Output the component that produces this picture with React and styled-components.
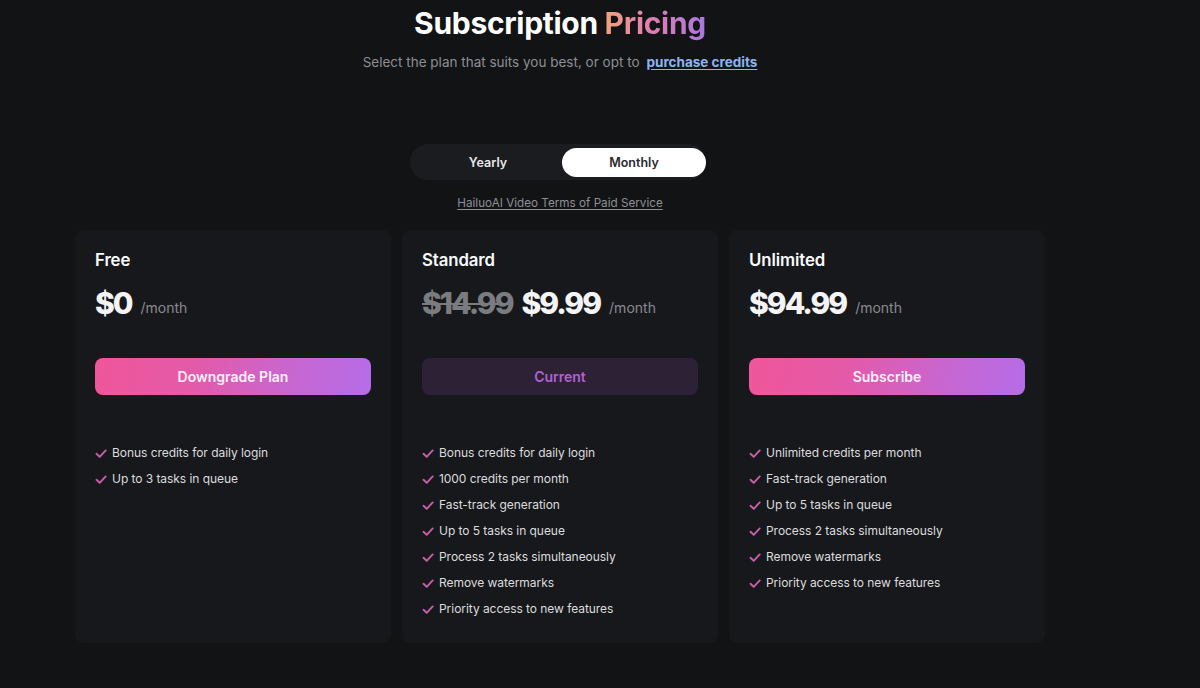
import React from "react";
import styled, { createGlobalStyle } from "styled-components";

const Global = createGlobalStyle`
  html, body { margin: 0; padding: 0; background: #121315; }
  body { font-family: Inter, "Noto Sans", sans-serif; color: #fff; }
  * { box-sizing: border-box; }
`;

const Page = styled.div`
  width: 1200px;
  height: 688px;
  overflow: hidden;
  background: #121315;
  padding-left: 75px;
`;

const Column = styled.div`
  width: 970px;
  display: flex;
  flex-direction: column;
  align-items: center;
`;

const Title = styled.h1`
  margin: 4px 0 0;
  font-size: 30px;
  line-height: 38px;
  font-weight: 700;
  letter-spacing: -0.3px;
  color: #fff;
`;

const Gradient = styled.span`
  background: linear-gradient(90deg, #f0a27c 0%, #e07eb0 45%, #a877e0 100%);
  -webkit-background-clip: text;
  background-clip: text;
  color: transparent;
`;

const Subtitle = styled.p`
  margin: 11px 0 0;
  font-size: 13.5px;
  line-height: 18px;
  color: #8e8f94;
`;

const PurchaseLink = styled.a`
  margin-left: 7px;
  color: #8fb3f0;
  font-weight: 700;
  text-decoration: underline;
  text-underline-offset: 2px;
`;

const Toggle = styled.div`
  margin-top: 73px;
  width: 296px;
  height: 36px;
  border-radius: 18px;
  background: #1b1c1f;
  padding: 4px 0 3px 4px;
  display: flex;
  transform: translateX(-2px);
`;

const ToggleOption = styled.div`
  flex: ${(p) => (p.$active ? "0 0 144px" : "1")};
  border-radius: 15px;
  display: flex;
  align-items: center;
  justify-content: center;
  font-size: 12.5px;
  font-weight: 600;
  color: ${(p) => (p.$active ? "#2a2a2e" : "#e8e8ea")};
  background: ${(p) => (p.$active ? "#ffffff" : "transparent")};
`;

const Terms = styled.a`
  margin-top: 15px;
  font-size: 11.7px;
  line-height: 16px;
  color: #8e8f94;
  text-decoration: underline;
  text-underline-offset: 2px;
`;

const Cards = styled.div`
  margin-top: 19px;
  width: 100%;
  display: grid;
  grid-template-columns: repeat(3, 316px);
  column-gap: 11px;
`;

const Card = styled.div`
  height: 413px;
  border-radius: 8px;
  background: #17181b;
  padding: 19px 20px 0;
`;

const PlanName = styled.div`
  font-size: 16.8px;
  line-height: 22px;
  font-weight: 600;
  letter-spacing: -0.1px;
  color: #fafafa;
`;

const PriceRow = styled.div`
  margin-top: 14px;
  display: flex;
  align-items: baseline;
  height: 38px;
`;

const Price = styled.span`
  font-size: 30px;
  font-weight: 800;
  letter-spacing: -2px;
  color: ${(p) => (p.$old ? "#7b7c80" : "#f4f4f5")};
  text-decoration: ${(p) => (p.$old ? "line-through" : "none")};
  text-decoration-thickness: 2px;
  margin-right: 9px;
`;

const Per = styled.span`
  font-size: 14px;
  color: #8a8b90;
  transform: translateY(-1px);
`;

const Button = styled.div`
  margin-top: 35px;
  height: 37px;
  border-radius: 8px;
  display: flex;
  align-items: center;
  justify-content: center;
  font-size: 14px;
  font-weight: 600;
  color: ${(p) => (p.$current ? "#b260d6" : "#fff1f8")};
  background: ${(p) =>
    p.$current
      ? "#2d2135"
      : "linear-gradient(100deg, #f0569a 0%, #e45aa8 35%, #c866d0 70%, #b66ce8 100%)"};
`;

const Features = styled.ul`
  list-style: none;
  margin: 49px 0 0;
  padding: 0;
  display: flex;
  flex-direction: column;
  gap: 8px;
`;

const Feature = styled.li`
  display: flex;
  align-items: center;
  gap: 5px;
  font-size: 12px;
  line-height: 18px;
  letter-spacing: -0.05px;
  color: #dcdcde;
`;

const Check = () => (
  <svg width="12" height="11" viewBox="0 0 12 11" fill="none">
    <path d="M1.5 5.8 L4.7 8.8 L10.7 2.4" stroke="#c95fa9" strokeWidth="1.9" strokeLinecap="round" strokeLinejoin="round" />
  </svg>
);

const plans = [
  {
    name: "Free",
    price: "$0",
    button: "Downgrade Plan",
    features: ["Bonus credits for daily login", "Up to 3 tasks in queue"],
  },
  {
    name: "Standard",
    old: "$14.99",
    price: "$9.99",
    button: "Current",
    current: true,
    features: [
      "Bonus credits for daily login",
      "1000 credits per month",
      "Fast-track generation",
      "Up to 5 tasks in queue",
      "Process 2 tasks simultaneously",
      "Remove watermarks",
      "Priority access to new features",
    ],
  },
  {
    name: "Unlimited",
    price: "$94.99",
    button: "Subscribe",
    features: [
      "Unlimited credits per month",
      "Fast-track generation",
      "Up to 5 tasks in queue",
      "Process 2 tasks simultaneously",
      "Remove watermarks",
      "Priority access to new features",
    ],
  },
];

export default function App() {
  return (
    <Page>
      <Global />
      <Column>
        <Title>
          Subscription <Gradient>Pricing</Gradient>
        </Title>
        <Subtitle>
          Select the plan that suits you best, or opt to
          <PurchaseLink>purchase credits</PurchaseLink>
        </Subtitle>
        <Toggle>
          <ToggleOption>Yearly</ToggleOption>
          <ToggleOption $active>Monthly</ToggleOption>
        </Toggle>
        <Terms>HailuoAI Video Terms of Paid Service</Terms>
        <Cards>
          {plans.map((p) => (
            <Card key={p.name}>
              <PlanName>{p.name}</PlanName>
              <PriceRow>
                {p.old && <Price $old>{p.old}</Price>}
                <Price>{p.price}</Price>
                <Per>/month</Per>
              </PriceRow>
              <Button $current={p.current}>{p.button}</Button>
              <Features>
                {p.features.map((f) => (
                  <Feature key={f}>
                    <Check />
                    {f}
                  </Feature>
                ))}
              </Features>
            </Card>
          ))}
        </Cards>
      </Column>
    </Page>
  );
}
